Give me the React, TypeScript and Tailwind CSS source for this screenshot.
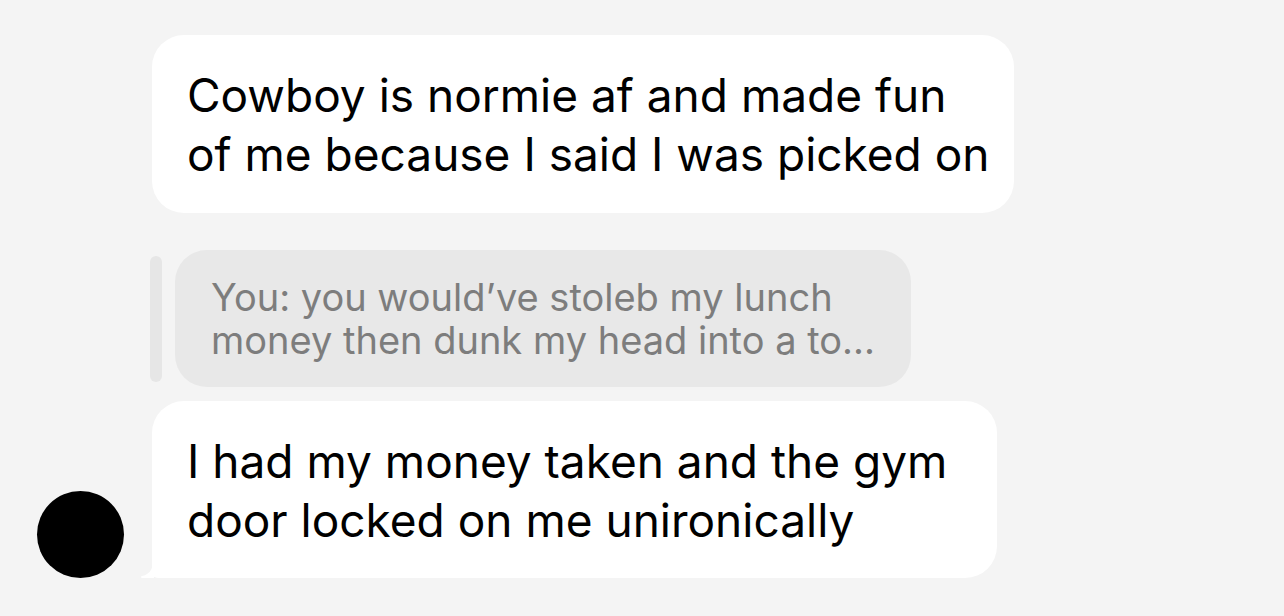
import React from "react";

export default function App() {
  const font = { fontFamily: "Inter, 'Noto Sans', sans-serif" };
  return (
    <div className="w-[1284px] h-[616px] bg-[#f4f4f4] overflow-hidden" style={font}>
      <div className="flex flex-col pt-[35px]">
        <div className="pl-[152px]">
          <div className="w-[862px] h-[178px] bg-white rounded-[32px] flex flex-col justify-center pl-[35px] pt-[2px] text-[46px] leading-[59px] text-black">
            <div className="whitespace-nowrap">Cowboy is normie af and made fun</div>
            <div className="whitespace-nowrap">of me because I said I was picked on</div>
          </div>
        </div>
        <div className="flex items-center pl-[150px] mt-[37px] gap-[13px]">
          <div className="w-[12px] h-[126px] rounded-full bg-[#e6e6e6]" />
          <div className="w-[736px] h-[137px] bg-[#e8e8e8] rounded-[32px] flex flex-col justify-center pl-[36px] text-[38px] leading-[43px] text-[#7d7d7d]">
            <div className="whitespace-nowrap">You: you would’ve stoleb my lunch</div>
            <div className="whitespace-nowrap">money then dunk my head into a to...</div>
          </div>
        </div>
        <div className="flex items-end pl-[37px] mt-[14px] gap-[28px]">
          <div className="w-[87px] h-[87px] rounded-full bg-black" />
          <div className="relative w-[845px] h-[177px] bg-white rounded-[32px] rounded-bl-[6px] flex flex-col justify-center pl-[35px] pt-[2px] text-[46px] leading-[59px] text-black">
            <svg className="absolute left-[-12px] bottom-0" width="14" height="16" viewBox="0 0 14 16">
              <path d="M13 0 C13 8 8 13 2 14 Q0 14.5 1 15.5 Q2 16 4 16 L14 16 L14 0 Z" fill="#ffffff" />
            </svg>
            <div className="whitespace-nowrap">I had my money taken and the gym</div>
            <div className="whitespace-nowrap">door locked on me unironically</div>
          </div>
        </div>
      </div>
    </div>
  );
}
